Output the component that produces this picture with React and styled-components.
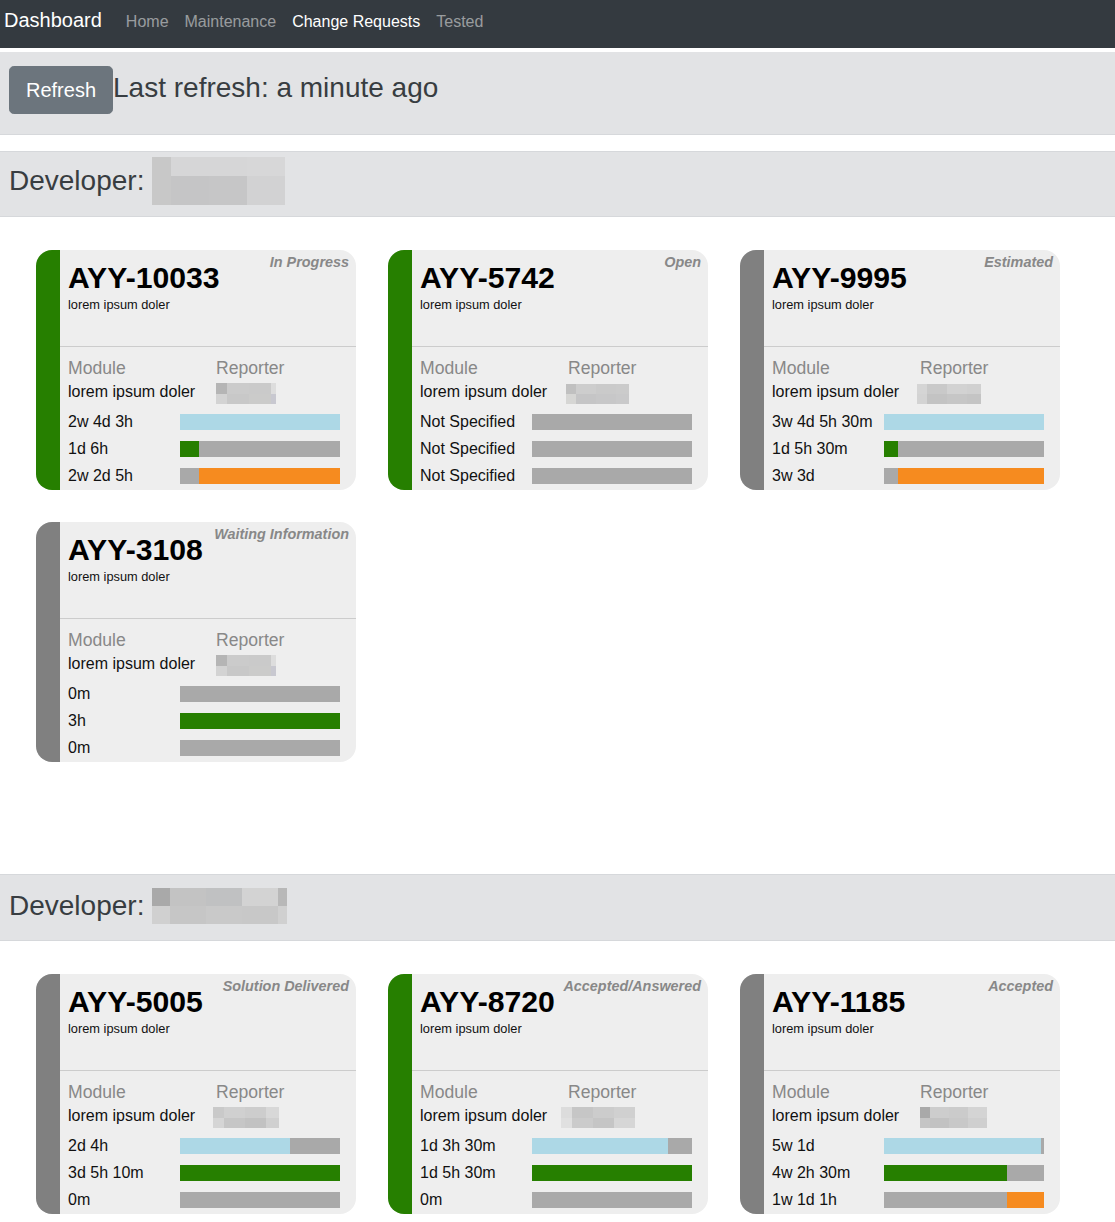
import React from 'react';
import styled, { createGlobalStyle } from 'styled-components';

const GlobalStyle = createGlobalStyle`
  body {
    margin: 0;
    background: #fff;
    font-family: Arial, "Liberation Sans", Helvetica, sans-serif;
    color: #212529;
  }
`;

const GREEN = '#267f00';
const BLUE = '#add8e6';
const ORANGE = '#f68b1f';
const TRACK = '#a9a9a9';

const Navbar = styled.nav`
  height: 48px;
  background: #343a40;
  display: flex;
  align-items: baseline;
  padding: 5px 4px 0;
  box-sizing: border-box;
`;

const Brand = styled.span`
  font-size: 20px;
  line-height: 30px;
  color: #fff;
  margin-right: 16px;
`;

const NavLink = styled.span`
  font-size: 16px;
  line-height: 24px;
  padding: 0 8px;
  color: ${({ $active }) => ($active ? '#fff' : 'rgba(255, 255, 255, 0.5)')};
`;

const RefreshBar = styled.div`
  margin-top: 4px;
  background: #e2e3e5;
  border-bottom: 1px solid #d6d8db;
  padding: 14px 9px 20px;
  display: flex;
  align-items: baseline;
`;

const Button = styled.button`
  font-family: inherit;
  font-size: 20px;
  line-height: 30px;
  padding: 8px 16px;
  border: 1px solid #6c757d;
  border-radius: 4.8px;
  background: #6c757d;
  color: #fff;
`;

const BigText = styled.span`
  font-size: 28px;
  line-height: 33.6px;
  color: #383d41;
`;

const DevHeader = styled.div`
  margin-top: ${({ $top }) => $top}px;
  background: #e2e3e5;
  border-top: 1px solid #d6d8db;
  border-bottom: 1px solid #d6d8db;
  padding: ${({ $pad }) => `${$pad[0]}px 9px ${$pad[1]}px`};
  display: flex;
  align-items: center;
  gap: 8px;
`;

const Pixels = styled.div`
  display: grid;
  grid-template-columns: ${({ $cols }) => $cols.map((c) => `${c}px`).join(' ')};
  grid-template-rows: ${({ $rows }) => $rows.map((r) => `${r}px`).join(' ')};
  margin-left: ${({ $shift }) => $shift || 0}px;
`;

const Cell = styled.div`
  background: ${({ $c }) => $c};
`;

const CardGrid = styled.div`
  display: grid;
  grid-template-columns: repeat(3, 320px);
  gap: 32px;
  padding: 33px 36px ${({ $bottom }) => $bottom}px;
`;

const Card = styled.div`
  position: relative;
  height: 240px;
  display: flex;
  background: #eee;
  border-radius: 16px;
  overflow: hidden;
`;

const Stripe = styled.div`
  width: 24px;
  flex: none;
  background: ${({ $c }) => $c};
`;

const CardBody = styled.div`
  flex: 1;
  display: flex;
  flex-direction: column;
`;

const CardHead = styled.div`
  height: 97px;
  box-sizing: border-box;
  padding: 10px 16px 0 8px;
  border-bottom: 1px solid #ccc;
`;

const Key = styled.div`
  font-size: 30.2px;
  line-height: 35.4px;
  font-weight: 700;
  color: #000;
`;

const Desc = styled.div`
  font-size: 12.8px;
  line-height: 19.2px;
  color: #111;
`;

const Status = styled.div`
  position: absolute;
  top: 4px;
  right: 7px;
  font-size: 14.4px;
  line-height: 17.3px;
  font-weight: 700;
  font-style: italic;
  color: #888;
`;

const Details = styled.div`
  padding: 10px 16px 0 8px;
`;

const InfoRow = styled.div`
  display: grid;
  grid-template-columns: 148px 1fr;
  align-items: center;
`;

const Label = styled.div`
  font-size: 17.6px;
  line-height: 22px;
  color: #888;
`;

const Value = styled.div`
  font-size: 16px;
  line-height: 24px;
  color: #111;
  margin-top: 1px;
  margin-bottom: 4px;
`;

const TimeRow = styled.div`
  display: grid;
  grid-template-columns: 112px 160px;
  align-items: center;
  height: 27px;
`;

const TimeText = styled.div`
  font-size: 16px;
  line-height: 27px;
  color: #111;
  white-space: nowrap;
`;

const Track = styled.div`
  height: 16px;
  display: flex;
  background: ${TRACK};
`;

const Seg = styled.div`
  height: 100%;
  background: ${({ $c }) => $c};
`;

const Pixelated = ({ cols, rows, colors, shift }) => (
  <Pixels $cols={cols} $rows={rows} $shift={shift}>
    {colors.flat().map((c, i) => (
      <Cell key={i} $c={c} />
    ))}
  </Pixels>
);

// bar: list of [color, width px of 160]
const Bar = ({ segs }) => (
  <Track>
    {segs.map(([c, w], i) => (
      <Seg key={i} $c={c} style={{ width: `${(w / 160) * 100}%` }} />
    ))}
  </Track>
);

const REP_A = {
  cols: [11, 22, 22, 5],
  rows: [11, 10],
  colors: [
    ['#b5b5b5', '#cbcbcb', '#cacaca', '#dddddd'],
    ['#d3d3d3', '#c8c8c8', '#cbcbca', '#c8c8d0'],
  ],
};

const sections = [
  {
    top: 16,
    pad: [5, 11],
    bottom: 112,
    dev: {
      cols: [19, 38, 38, 38],
      rows: [19, 29],
      colors: [
        ['#c8c8c8', '#d6d6d7', '#d6d6d7', '#d7d7d8'],
        ['#c8c8c8', '#c5c5c6', '#c6c6c7', '#d2d2d3'],
      ],
    },
    cards: [
      {
        key: 'AYY-10033',
        status: 'In Progress',
        stripe: GREEN,
        rep: { ...REP_A, shift: 0 },
        rows: [
          ['2w 4d 3h', [[BLUE, 160]]],
          ['1d 6h', [[GREEN, 19]]],
          ['2w 2d 5h', [['transparent', 19], [ORANGE, 141]]],
        ],
      },
      {
        key: 'AYY-5742',
        status: 'Open',
        stripe: GREEN,
        rep: {
          shift: -2,
          cols: [10, 20, 20, 13],
          rows: [10, 10],
          colors: [
            ['#c0c0c0', '#cdcdcd', '#cacaca', '#cbcbcb'],
            ['#d6d6d4', '#c5c5c6', '#c7c7c8', '#c9c9ca'],
          ],
        },
        rows: [
          ['Not Specified', []],
          ['Not Specified', []],
          ['Not Specified', []],
        ],
      },
      {
        key: 'AYY-9995',
        status: 'Estimated',
        stripe: '#808080',
        rep: {
          shift: -3,
          cols: [10, 20, 20, 14],
          rows: [10, 10],
          colors: [
            ['#d5d5d5', '#c9c9c9', '#d2d2d2', '#d0d0d0'],
            ['#d3d3d3', '#c3c3c3', '#c6c6c6', '#c4c4c4'],
          ],
        },
        rows: [
          ['3w 4d 5h 30m', [[BLUE, 160]]],
          ['1d 5h 30m', [[GREEN, 14]]],
          ['3w 3d', [['transparent', 14], [ORANGE, 146]]],
        ],
      },
      {
        key: 'AYY-3108',
        status: 'Waiting Information',
        stripe: '#808080',
        rep: { ...REP_A, shift: 0 },
        rows: [
          ['0m', []],
          ['3h', [[GREEN, 160]]],
          ['0m', []],
        ],
      },
    ],
  },
  {
    top: 0,
    pad: [13, 16],
    bottom: 0,
    dev: {
      cols: [18, 36, 36, 36, 9],
      rows: [18, 18],
      colors: [
        ['#a9a9a9', '#c3c3c3', '#c0c1c2', '#d3d3d3', '#b8b8b8'],
        ['#d0d0d0', '#c6c6c6', '#c9c9c9', '#c8c8c8', '#d0d0d0'],
      ],
    },
    cards: [
      {
        key: 'AYY-5005',
        status: 'Solution Delivered',
        stripe: '#808080',
        rep: {
          shift: -3,
          cols: [11, 21, 21, 13],
          rows: [11, 10],
          colors: [
            ['#c9c9c9', '#d0d0d0', '#cdcdcd', '#d8d8d8'],
            ['#d5d5d5', '#c6c6c6', '#c2c2c2', '#d0d0d0'],
          ],
        },
        rows: [
          ['2d 4h', [[BLUE, 110]]],
          ['3d 5h 10m', [[GREEN, 160]]],
          ['0m', []],
        ],
      },
      {
        key: 'AYY-8720',
        status: 'Accepted/Answered',
        stripe: GREEN,
        rep: {
          shift: -7,
          cols: [11, 21, 21, 21],
          rows: [11, 10],
          colors: [
            ['#dcdcdc', '#c6c6c6', '#cccccc', '#d0d0d0'],
            ['#e0e0e0', '#cbcbcb', '#c5c5c5', '#d6d6d6'],
          ],
        },
        rows: [
          ['1d 3h 30m', [[BLUE, 136]]],
          ['1d 5h 30m', [[GREEN, 160]]],
          ['0m', []],
        ],
      },
      {
        key: 'AYY-1185',
        status: 'Accepted',
        stripe: '#808080',
        rep: {
          shift: 0,
          cols: [10, 19, 19, 19],
          rows: [11, 10],
          colors: [
            ['#a9a9a9', '#cdcdcd', '#cbcbcb', '#d4d4d4'],
            ['#c5c5c5', '#c2c2c2', '#c8c8c8', '#cfcfcf'],
          ],
        },
        rows: [
          ['5w 1d', [[BLUE, 157]]],
          ['4w 2h 30m', [[GREEN, 123]]],
          ['1w 1d 1h', [['transparent', 123], [ORANGE, 37]]],
        ],
      },
    ],
  },
];

const TicketCard = ({ card }) => (
  <Card>
    <Stripe $c={card.stripe} />
    <CardBody>
      <CardHead>
        <Key>{card.key}</Key>
        <Desc>lorem ipsum doler</Desc>
      </CardHead>
      <Details>
        <InfoRow>
          <Label>Module</Label>
          <Label>Reporter</Label>
        </InfoRow>
        <InfoRow>
          <Value>lorem ipsum doler</Value>
          <Pixelated {...card.rep} />
        </InfoRow>
        {card.rows.map(([text, segs], i) => (
          <TimeRow key={i}>
            <TimeText>{text}</TimeText>
            <Bar segs={segs} />
          </TimeRow>
        ))}
      </Details>
    </CardBody>
    <Status>{card.status}</Status>
  </Card>
);

const App = () => (
  <>
    <GlobalStyle />
    <Navbar>
      <Brand>Dashboard</Brand>
      <NavLink>Home</NavLink>
      <NavLink>Maintenance</NavLink>
      <NavLink $active>Change Requests</NavLink>
      <NavLink>Tested</NavLink>
    </Navbar>
    <RefreshBar>
      <Button>Refresh</Button>
      <BigText>Last refresh: a minute ago</BigText>
    </RefreshBar>
    {sections.map((s, i) => (
      <div key={i}>
        <DevHeader $top={s.top} $pad={s.pad}>
          <BigText>Developer:</BigText>
          <Pixelated {...s.dev} />
        </DevHeader>
        <CardGrid $bottom={s.bottom}>
          {s.cards.map((c) => (
            <TicketCard key={c.key} card={c} />
          ))}
        </CardGrid>
      </div>
    ))}
  </>
);

export default App;
